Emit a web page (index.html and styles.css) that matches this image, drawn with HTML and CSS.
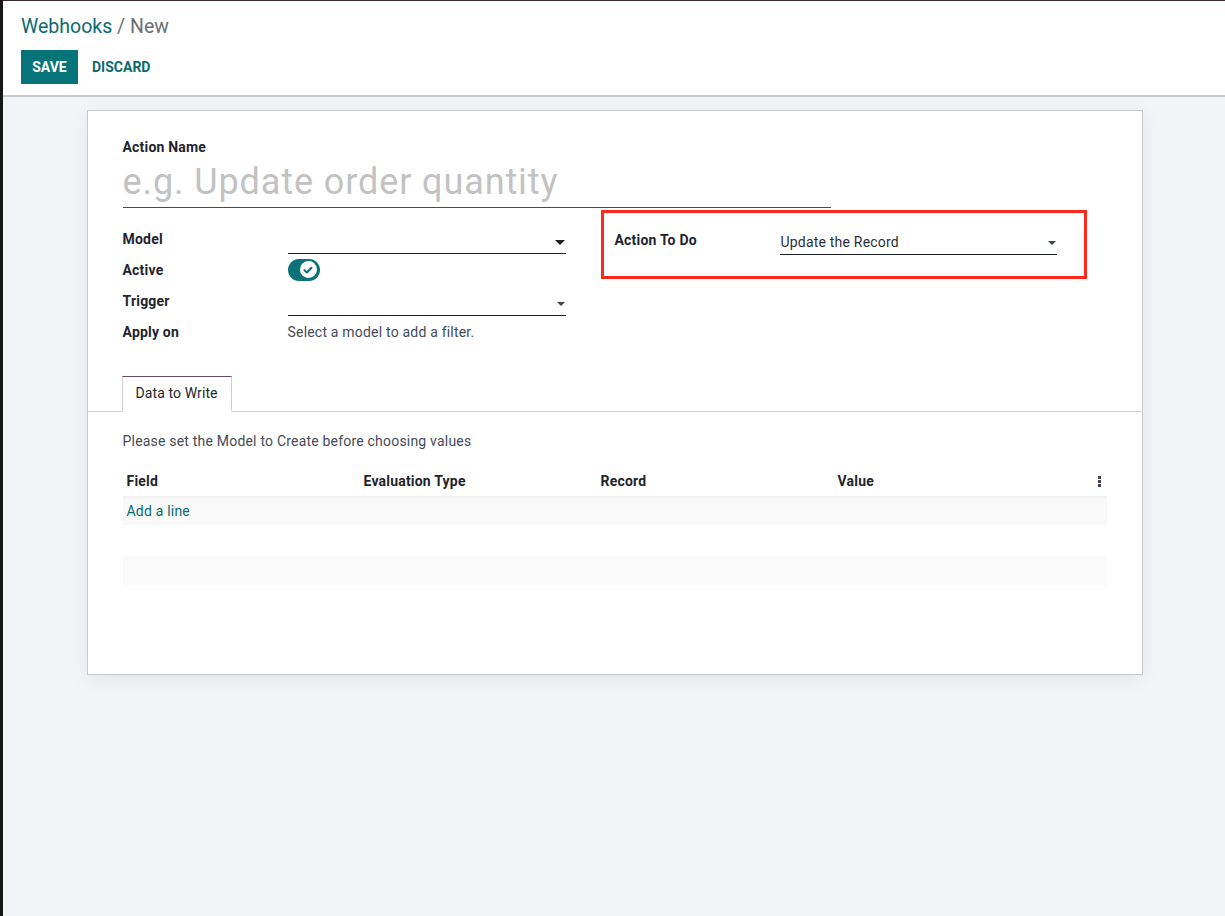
FILE: index.html
```html
<!DOCTYPE html>
<html>
<head>
<meta charset="utf-8">
<link rel="stylesheet" href="styles.css">
</head>
<body>
<div class="strip"></div>
<div class="app">
  <header class="cp">
    <div class="breadcrumb"><span class="bc-link">Webhooks</span><span class="bc-sep"> / </span><span class="bc-cur">New</span></div>
    <div class="buttons">
      <button class="btn-primary">SAVE</button>
      <button class="btn-link">DISCARD</button>
    </div>
  </header>
  <main class="content">
    <div class="sheet">
      <div class="sheet-top">
        <div class="title-label">Action Name</div>
        <div class="title-input">e.g. Update order quantity</div>
        <div class="groups">
          <div class="group">
            <div class="row">
              <div class="lbl">Model</div>
              <div class="field select"><span class="val"></span><span class="caret"></span></div>
            </div>
            <div class="row">
              <div class="lbl">Active</div>
              <div class="field plain">
                <span class="toggle"><span class="knob"><svg viewBox="0 0 16 16" width="12" height="12"><path d="M3.3 8.3 L6.5 11.3 L12.6 5" fill="none" stroke="#0b7378" stroke-width="2.8" stroke-linecap="round" stroke-linejoin="round"/></svg></span></span>
              </div>
            </div>
            <div class="row">
              <div class="lbl">Trigger</div>
              <div class="field select"><span class="val"></span><span class="caret small"></span></div>
            </div>
            <div class="row">
              <div class="lbl">Apply on</div>
              <div class="field plain muted">Select a model to add a filter.</div>
            </div>
          </div>
          <div class="group right">
            <div class="highlight">
              <div class="row">
                <div class="lbl">Action To Do</div>
                <div class="field select"><span class="val">Update the Record</span><span class="caret small"></span></div>
              </div>
            </div>
          </div>
        </div>
      </div>
      <div class="tabs">
        <div class="tab">Data to Write</div>
      </div>
      <div class="tab-pane">
        <p class="note">Please set the Model to Create before choosing values</p>
        <table class="list">
          <thead>
            <tr><th>Field</th><th>Evaluation Type</th><th>Record</th><th>Value</th><th class="opt"><span class="kebab"><i></i><i></i><i></i></span></th></tr>
          </thead>
          <tbody>
            <tr class="add"><td colspan="5"><a class="add-line">Add a line</a></td></tr>
            <tr class="gap"><td colspan="5"></td></tr>
            <tr class="foot"><td colspan="5"></td></tr>
          </tbody>
        </table>
      </div>
    </div>
  </main>
</div>
</body>
</html>
```

FILE: styles.css
```css
* { box-sizing: border-box; }
html, body { margin: 0; padding: 0; height: 100%; }
body {
  display: flex;
  font-family: Roboto, "Noto Sans", sans-serif;
  color: #1f242c;
  background: #f3f4f8;
  font-size: 14px;
  letter-spacing: 0.2px;
}
.strip {
  width: 3px;
  flex: none;
  background: #161616;
}
.app {
  flex: 1;
  border-top: 1px solid #3a2833;
  display: flex;
  flex-direction: column;
}
.cp {
  background: #fff;
  border-bottom: 2px solid #c9c9cf;
  padding: 13px 18px 10px;
  height: 96px;
}
.breadcrumb {
  font-size: 19.5px;
  line-height: 26px;
  letter-spacing: 0;
}
.bc-link { color: #0b6a6e; }
.bc-sep, .bc-cur { color: #6b6f76; }
.buttons {
  margin-top: 10px;
  display: flex;
  align-items: center;
}
.btn-primary {
  font-family: inherit;
  background: #067479;
  color: #fff;
  border: 0;
  height: 34px;
  width: 57px;
  font-weight: 700;
  font-size: 14px;
  padding: 0;
}
.btn-link {
  font-family: inherit;
  background: none;
  border: 0;
  color: #0b6a6e;
  font-weight: 700;
  font-size: 14px;
  padding: 0;
  margin-left: 14px;
}
.content {
  padding-top: 13px;
  padding-left: 1px;
}
.sheet {
  width: 1056px;
  margin: 0 auto;
  background: #fff;
  border: 1px solid #c8c8cd;
  box-shadow: 0 5px 20px rgba(0,0,0,0.06);
  height: 565px;
}
.sheet-top {
  padding: 27px 35px 0;
}
.title-label {
  font-weight: 700;
  font-size: 14px;
  line-height: 18px;
}
.title-input {
  width: 708px;
  font-size: 36px;
  letter-spacing: 0.9px;
  color: #c2c2c2;
  line-height: 44px;
  margin-top: 4px;
  padding-bottom: 3px;
  border-bottom: 1px solid #0e6569;
}
.groups {
  display: flex;
  margin-top: 2px;
}
.group {
  width: 443px;
  padding-top: 13px;
}
.group.right {
  margin-left: 35px;
  padding-top: 0;
}
.highlight {
  width: 486px;
  border: 3px solid #fd2a1b;
  padding: 11px 27px 21px 11px;
}
.row {
  display: flex;
  align-items: flex-end;
  height: 31px;
}
.lbl {
  width: 165px;
  flex: none;
  font-weight: 700;
  line-height: 22px;
  align-self: center;
}
.field {
  width: 278px;
  display: flex;
  align-items: center;
}
.field.select {
  height: 26px;
  border-bottom: 1px solid #1d2127;
  justify-content: space-between;
  padding: 0 1px;
}
.field.plain { align-self: center; }
.muted { color: #454b55; }
.val { color: #2a2f38; }
.caret {
  width: 0; height: 0;
  border-left: 5px solid transparent;
  border-right: 5px solid transparent;
  border-top: 5px solid #1d2127;
  margin-top: 3px;
}
.caret.small {
  border-left-width: 4px;
  border-right-width: 4px;
  border-top: 4px solid #3d424b;
}
.toggle {
  display: inline-flex;
  align-items: center;
  justify-content: flex-end;
  width: 32px;
  height: 22px;
  border-radius: 11px;
  background: #0b7378;
  padding-right: 3px;
}
.knob {
  width: 17px;
  height: 17px;
  border-radius: 50%;
  background: #fff;
  display: flex;
  align-items: center;
  justify-content: center;
}
.tabs {
  margin-top: 29px;
  border-bottom: 1px solid #cfcfd3;
  padding-left: 34px;
  height: 36px;
  display: flex;
  align-items: flex-end;
}
.tab {
  height: 36px;
  margin-bottom: -1px;
  padding: 0 13px;
  background: #fff;
  border: 1px solid #cfcfd3;
  border-top-color: #6e4a66;
  border-bottom-color: #fff;
  line-height: 33px;
  font-size: 14px;
  letter-spacing: 0.1px;
  color: #1f242c;
}
.tab-pane {
  padding: 18px 35px 0;
}
.note {
  margin: 0;
  color: #454b55;
  line-height: 22px;
}
.list {
  margin-top: 13px;
  width: 984px;
  border-collapse: collapse;
  table-layout: fixed;
}
.list th {
  text-align: left;
  font-weight: 700;
  height: 31px;
  padding: 0 4px;
  width: 237px;
  vertical-align: middle;
}
.list th.opt { width: 36px; text-align: right; padding-right: 6px; }
.kebab {
  display: inline-flex;
  flex-direction: column;
  gap: 1px;
  vertical-align: middle;
}
.kebab i {
  display: block;
  width: 3px;
  height: 3px;
  background: #3d424b;
}
.list tr.add td {
  height: 29px;
  background: #f9f9f9;
  box-shadow: inset 0 3px 4px -2px rgba(0,0,0,0.06);
  padding: 0 4px;
}
.add-line { color: #0b6a6e; }
.list tr.gap td { height: 31px; }
.list tr.foot td { height: 29px; background: #fafafa; }
```
